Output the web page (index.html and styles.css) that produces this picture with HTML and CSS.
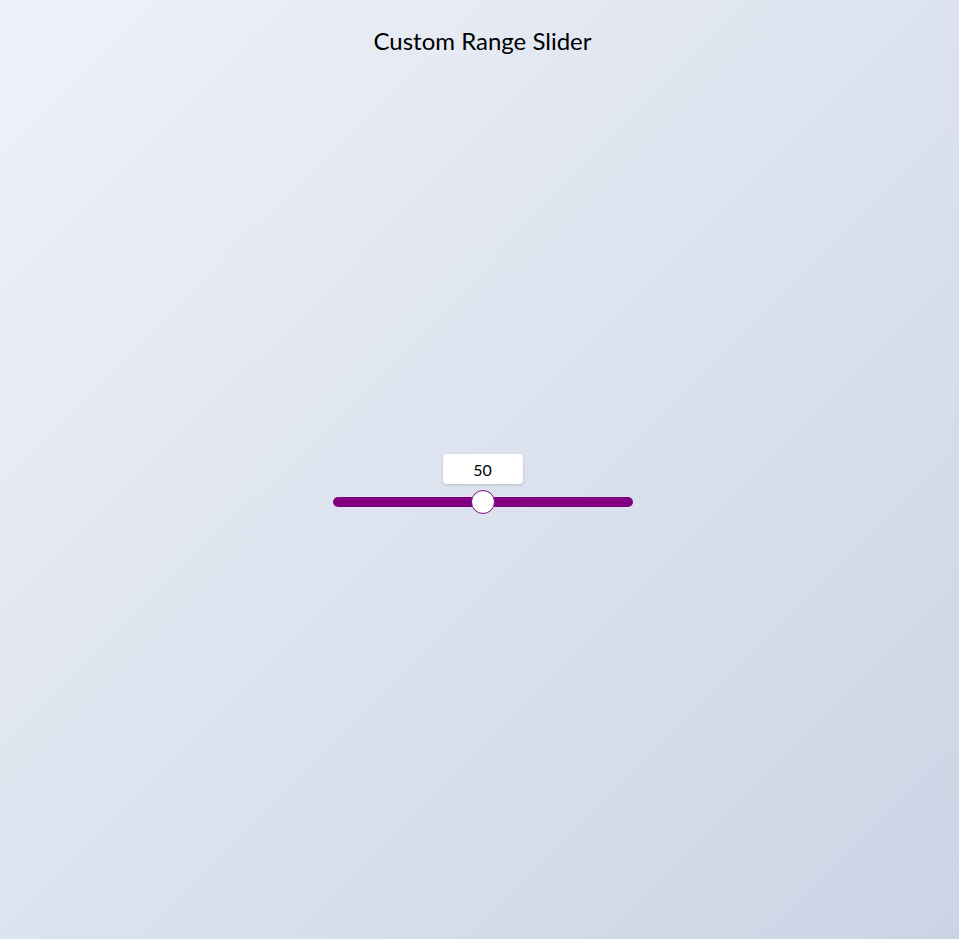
FILE: index.html
```html
<!DOCTYPE html>
<html>
<head>
<meta charset="utf-8">
<link rel="stylesheet" href="styles.css">
</head>
<body>
<div class="page">
  <h1 class="title">Custom Range Slider</h1>
  <div class="slider-area">
    <div class="slider-box">
      <div class="value-box">50</div>
      <input class="range" type="range" min="0" max="100" value="50">
    </div>
  </div>
</div>
</body>
</html>
```
FILE: styles.css
```css
html, body {
  margin: 0;
  padding: 0;
  height: 100%;
}
body {
  background: linear-gradient(135deg, #eef2f8 0%, #cbd4e5 100%);
  font-family: Lato, "Liberation Sans", sans-serif;
  color: #000;
}
.page {
  box-sizing: border-box;
  height: 939px;
  padding-left: 6px;
  display: flex;
  flex-direction: column;
  align-items: center;
}
.title {
  margin: 26px 0 0;
  font-size: 24px;
  font-weight: 400;
  line-height: 30px;
}
.slider-area {
  margin-top: 398px;
  display: flex;
  justify-content: center;
}
.slider-box {
  display: flex;
  flex-direction: column;
  align-items: center;
  width: 300px;
}
.value-box {
  box-sizing: border-box;
  width: 80px;
  height: 30px;
  padding-top: 1px;
  background: #fff;
  border-radius: 4px;
  box-shadow: 0 1px 3px rgba(0,0,0,0.18);
  font-size: 16px;
  line-height: 29px;
  text-align: center;
}
.range {
  -webkit-appearance: none;
  appearance: none;
  margin: 6px 0 0;
  width: 300px;
  height: 24px;
  background: transparent;
}
.range::-webkit-slider-runnable-track {
  height: 10px;
  background: #800080;
  border-radius: 5px;
}
.range::-webkit-slider-thumb {
  -webkit-appearance: none;
  appearance: none;
  width: 24px;
  height: 24px;
  margin-top: -7px;
  border-radius: 50%;
  background: #fff;
  border: 1px solid #800080;
  box-sizing: border-box;
}
```
